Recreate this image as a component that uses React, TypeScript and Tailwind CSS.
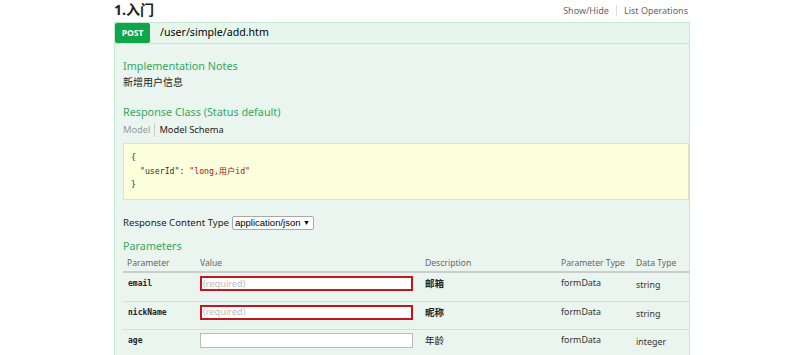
const font = "font-['Noto_Sans','Noto_Sans_CJK_SC',sans-serif]";
const mono = "font-['DejaVu_Sans_Mono','Noto_Sans_CJK_SC',monospace]";

const params = [
  { name: "email", required: true, desc: "邮箱", type: "formData", data: "string" },
  { name: "nickName", required: true, desc: "昵称", type: "formData", data: "string" },
  { name: "age", required: false, desc: "年龄", type: "formData", data: "integer" },
];

const cols = "grid grid-cols-[77px_224px_137px_75px_1fr]";

const App = () => {
  return (
    <div className={`w-[800px] h-[355px] bg-white overflow-hidden ${font}`}>
      <div className="ml-[114px] w-[576px]">
        <div className="flex items-center justify-between h-[22px] pb-[2px]">
          <h2 className="text-[14px] font-bold text-[#222] leading-none">1.入门</h2>
          <div className="flex items-center text-[9px] text-[#666] leading-none pr-[2px]">
            <span className="pr-[7px]">Show/Hide</span>
            <span className="border-l border-[#ddd] pl-[7px] py-[1px]">List Operations</span>
          </div>
        </div>

        <div className="flex items-center h-[22px] bg-[#e7f6ec] border border-[#c3e8d1]">
          <span className="h-full w-[35px] bg-[#10a54a] text-white text-[8.5px] font-bold flex items-center justify-center rounded-[2px]">
            POST
          </span>
          <span className="ml-[10px] text-[10.6px] text-[#000]">/user/simple/add.htm</span>
        </div>

        <div className="bg-[#ebf5f0] border-l border-r border-[#c3e8d1] h-[320px] pl-[8px] pt-[14px]">
          <h4 className="text-[10.8px] text-[#34a85a] leading-[16px]">Implementation Notes</h4>
          <p className="text-[10px] text-[#222] leading-[16px]">新增用户信息</p>

          <h4 className="mt-[14px] text-[10.8px] text-[#34a85a] leading-[16px]">Response Class (Status default)</h4>
          <div className="mt-[3px] flex items-center text-[9.3px] leading-[14px]">
            <span className="text-[#999] pr-[4px] border-r border-[#ccc]">Model</span>
            <span className="text-[#222] pl-[4px]">Model Schema</span>
          </div>

          <div className={`mt-[6px] h-[57px] bg-[#fcffdb] border border-[#e5e0c6] pl-[7px] pt-[7px] text-[8.2px] leading-[13.5px] ${mono}`}>
            <div className="text-[#333]">{"{"}</div>
            <div className="pl-[9px]">
              <span className="text-[#333]">"userId"</span>
              <span className="text-[#333]">: </span>
              <span className="text-[#a31515]">"long,用户id"</span>
            </div>
            <div className="text-[#333]">{"}"}</div>
          </div>

          <div className="mt-[16px] flex items-center text-[9.6px] text-[#222] leading-[14px]">
            <span>Response Content Type</span>
            <span className="ml-[3px] h-[14px] w-[82px] bg-white border border-[#a9a9a9] rounded-[2px] flex items-center justify-between pl-[2px] pr-[3px] text-[9.5px] text-[#000] font-['Liberation_Sans',sans-serif]">
              application/json
              <span className="text-[7px]">▼</span>
            </span>
          </div>

          <h4 className="mt-[8px] text-[10.8px] text-[#34a85a] leading-[16px]">Parameters</h4>

          <div className={`${cols} mt-[2px] text-[8.6px] text-[#666] leading-[14px] border-b-2 border-[#ccc] pb-[1px]`}>
            <span className="pl-[4px]">Parameter</span>
            <span>Value</span>
            <span className="pl-[1px]">Description</span>
            <span>Parameter Type</span>
            <span>Data Type</span>
          </div>

          {params.map((p, i) => (
            <div
              key={p.name}
              className={`${cols} items-start h-[28.5px] pt-[3px] ${i < params.length - 1 ? "border-b border-[#d6dfda]" : ""}`}
            >
              <span className={`pl-[5px] pt-[2px] text-[8px] font-bold text-[#222] leading-[12px] ${mono}`}>{p.name}</span>
              <div>
                <div
                  className={`h-[15px] w-[213px] bg-white flex items-center pl-[1px] text-[9.2px] text-[#bbb] ${
                    p.required ? "border-2 border-[#c3161e]" : "border border-[#bbb]"
                  }`}
                >
                  {p.required ? "(required)" : ""}
                </div>
              </div>
              <span className={`pl-[1px] pt-[2px] text-[9.5px] leading-[12px] text-[#222] ${p.required ? "font-bold" : ""}`}>
                {p.desc}
              </span>
              <span className="pt-[1px] text-[8.9px] leading-[12px] text-[#333]">{p.type}</span>
              <span className="pt-[3px] text-[8.9px] leading-[12px] text-[#333]">{p.data}</span>
            </div>
          ))}
        </div>
      </div>
    </div>
  );
};

export default App;
